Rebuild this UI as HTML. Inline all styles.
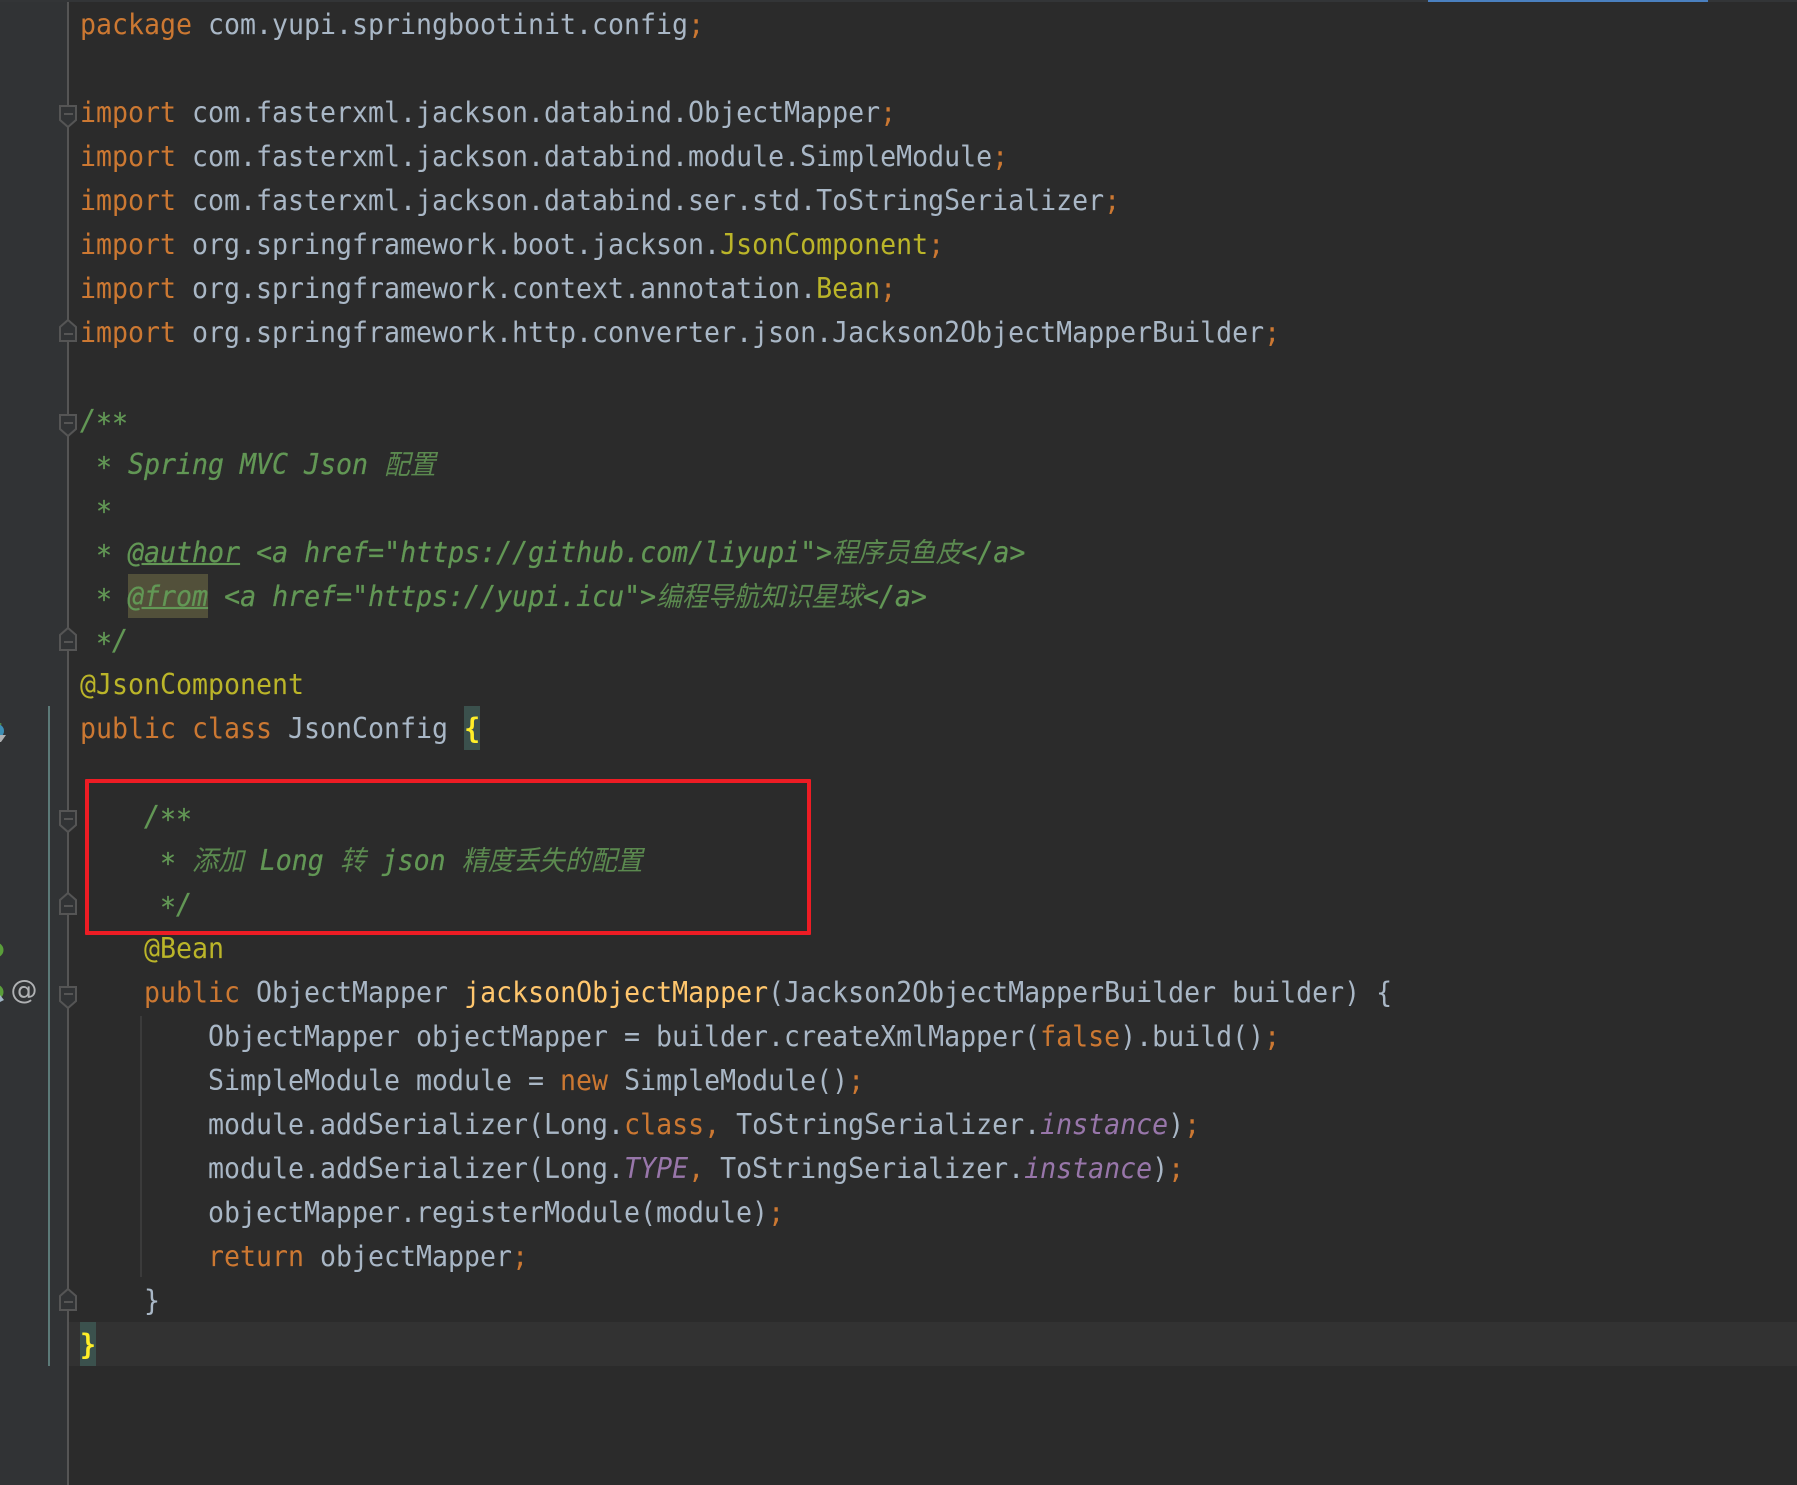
<!DOCTYPE html>
<html><head><meta charset="utf-8">
<style>
html,body{margin:0;padding:0;background:#2b2b2b;width:1797px;height:1485px;overflow:hidden}
#gut{position:absolute;left:0;top:0;width:68px;height:1485px;background:#313335}
#top{position:absolute;left:0;top:0;width:1797px;height:2px;background:#333537}
#blue{position:absolute;left:1428px;top:0;width:280px;height:2px;background:#4a80c0}
#vl{position:absolute;left:67px;top:2px;width:2px;height:1483px;background:#555555}
#gl{position:absolute;left:48px;top:706px;width:2px;height:660px;background:#5c7a78}
#cur{position:absolute;left:69px;top:1322px;width:1728px;height:44px;background:#323232}
#ig{position:absolute;left:140px;top:1016px;width:2px;height:261px;background:#3b3b3b}
.hl{position:absolute;height:44px}
#code{position:absolute;left:80px;top:4.2px;font-family:"DejaVu Sans Mono","Noto Sans CJK SC",monospace;font-size:26.58px;color:#a9b7c6}
.l{height:44px;line-height:44px;white-space:pre;transform:scaleY(1.06);transform-origin:0 32px}
.k{color:#cc7832}.a{color:#bbb529}.m{color:#ffc66d}.s{color:#9876aa;font-style:italic}
.d{color:#629755;font-style:italic;-webkit-text-stroke:.25px #629755}.u{text-decoration:underline;text-decoration-thickness:2px}.b{color:#ffef28;font-weight:bold}
.c{font-size:25.85px;opacity:.88;-webkit-text-stroke:0}
.t{position:relative;top:3px}
#box{position:absolute;left:84.5px;top:779px;width:718.5px;height:148px;border:4px solid #ed1c24;border-radius:1px}
svg{position:absolute;left:0;top:0}
</style></head><body>
<div id="gut"></div>
<div id="cur"></div>
<div id="top"></div><div id="blue"></div>
<div id="gl"></div><div id="vl"></div><div id="ig"></div>
<div class="hl" style="left:128px;top:574px;width:80px;background:#52503a"></div>
<div class="hl" style="left:464px;top:706px;width:16px;background:#3b514d"></div>
<div class="hl" style="left:80px;top:1322px;width:16px;background:#3b514d"></div>
<svg width="100" height="1485" fill="#313335" stroke="#555" stroke-width="2">
<path d="M60 106H76V120L68 127L60 120Z"/><path d="M64 114H73" fill="none"/>
<path d="M60 415H76V429L68 436L60 429Z"/><path d="M64 423H73" fill="none"/>
<path d="M60 811H76V825L68 832L60 825Z"/><path d="M64 819H73" fill="none"/>
<path d="M60 987H76V1001L68 1008L60 1001Z"/><path d="M64 994H73" fill="none"/>
<path d="M68 320L76 327V341H60V327Z"/><path d="M64 334H73" fill="none"/>
<path d="M68 628L76 635V650H60V635Z"/><path d="M64 642H73" fill="none"/>
<path d="M68 893L76 900V914H60V900Z"/><path d="M64 906H73" fill="none"/>
<path d="M68 1289L76 1296V1310H60V1296Z"/><path d="M64 1302H73" fill="none"/>
<g stroke="none">
<circle cx="-3" cy="731" r="7" fill="#3d8fb5"/><path d="M-2 722L2 724L-2 726Z" fill="#5aa04a"/><path d="M0 735H6L1 742H0Z" fill="#afb1b3"/>
<circle cx="-4" cy="950" r="7.5" fill="#5a9e3a"/>
<circle cx="-4" cy="992" r="7.5" fill="#5a9e3a"/><path d="M0 995L4 1000L0 1002Z" fill="#a0b4c4"/>
</g>
</svg>
<div style="position:absolute;left:9px;top:973px;width:30px;text-align:center;font:27px/36px 'DejaVu Sans',sans-serif;color:#afb1b3">@</div>
<div id="code">
<div class="l"><span class="k">package</span> com.yupi.springbootinit.config<span class="k">;</span></div>
<div class="l"> </div>
<div class="l"><span class="k">import</span> com.fasterxml.jackson.databind.ObjectMapper<span class="k">;</span></div>
<div class="l"><span class="k">import</span> com.fasterxml.jackson.databind.module.SimpleModule<span class="k">;</span></div>
<div class="l"><span class="k">import</span> com.fasterxml.jackson.databind.ser.std.ToStringSerializer<span class="k">;</span></div>
<div class="l"><span class="k">import</span> org.springframework.boot.jackson.<span class="a">JsonComponent</span><span class="k">;</span></div>
<div class="l"><span class="k">import</span> org.springframework.context.annotation.<span class="a">Bean</span><span class="k">;</span></div>
<div class="l"><span class="k">import</span> org.springframework.http.converter.json.Jackson2ObjectMapperBuilder<span class="k">;</span></div>
<div class="l"> </div>
<div class="l d">/<span class="t">**</span></div>
<div class="l d"> <span class="t">*</span> Spring MVC Json <span class="c">配置</span></div>
<div class="l d"> <span class="t">*</span></div>
<div class="l d"> <span class="t">*</span> <span class="u">@author</span> &lt;a href="https://github.com/liyupi"&gt;<span class="c">程序员鱼皮</span>&lt;/a&gt;</div>
<div class="l d"> <span class="t">*</span> <span class="u">@from</span> &lt;a href="https://yupi.icu"&gt;<span class="c">编程导航知识星球</span>&lt;/a&gt;</div>
<div class="l d"> <span class="t">*</span>/</div>
<div class="l a">@JsonComponent</div>
<div class="l"><span class="k">public class</span> JsonConfig <span class="b">{</span></div>
<div class="l"> </div>
<div class="l d">    /<span class="t">**</span></div>
<div class="l d">     <span class="t">*</span> <span class="c">添加</span> Long <span class="c">转</span> json <span class="c">精度丢失的配置</span></div>
<div class="l d">     <span class="t">*</span>/</div>
<div class="l a">    @Bean</div>
<div class="l">    <span class="k">public</span> ObjectMapper <span class="m">jacksonObjectMapper</span>(Jackson2ObjectMapperBuilder builder) {</div>
<div class="l">        ObjectMapper objectMapper = builder.createXmlMapper(<span class="k">false</span>).build()<span class="k">;</span></div>
<div class="l">        SimpleModule module = <span class="k">new</span> SimpleModule()<span class="k">;</span></div>
<div class="l">        module.addSerializer(Long.<span class="k">class,</span> ToStringSerializer.<span class="s">instance</span>)<span class="k">;</span></div>
<div class="l">        module.addSerializer(Long.<span class="s">TYPE</span><span class="k">,</span> ToStringSerializer.<span class="s">instance</span>)<span class="k">;</span></div>
<div class="l">        objectMapper.registerModule(module)<span class="k">;</span></div>
<div class="l">        <span class="k">return</span> objectMapper<span class="k">;</span></div>
<div class="l">    }</div>
<div class="l"><span class="b">}</span></div>
</div>
<div id="box"></div>
</body></html>
